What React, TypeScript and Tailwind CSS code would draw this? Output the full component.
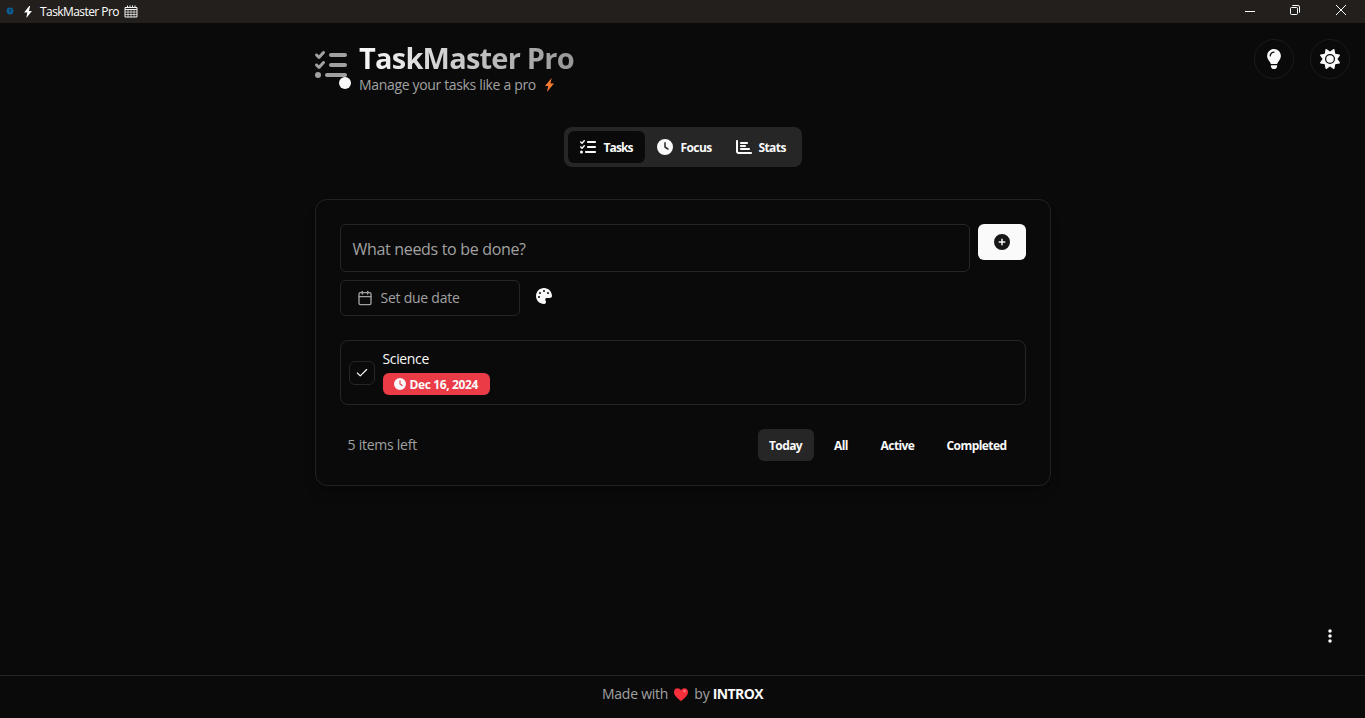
import type { ReactNode } from "react";
import { Calendar, Check } from "lucide-react";
import {
  FaChartBar,
  FaCirclePlus,
  FaClock,
  FaEllipsisVertical,
  FaLightbulb,
  FaListCheck,
  FaPalette,
  FaSun,
} from "react-icons/fa6";

function TitleBar() {
  return (
    <div className="flex h-[23px] shrink-0 items-center bg-[#231f1c] text-white">
      <svg className="ml-[6px] -mt-px size-2" viewBox="0 0 8 8">
        <circle cx="4" cy="4" r="3.4" fill="#0b5f92" />
        <path d="M3 2.6h2.2M4.1 2.6v3" stroke="#12304a" strokeWidth="1" />
      </svg>
      <svg className="ml-[10px] h-3 w-2" viewBox="0 0 8 12">
        <path d="M5.2 0 0.1 6.6h3.1L2.4 12 7.9 4.9H4.9L6.2 0z" fill="#fff" />
      </svg>
      <span className="ml-[8px] w-[80px] whitespace-nowrap text-[12px] leading-4 tracking-[-0.57px]">TaskMaster Pro</span>
      <svg className="ml-[4px] h-[13px] w-[14px]" viewBox="0 0 14 13" fill="none" stroke="#f2f2f2">
        <path d="M1 2.5h12v9.5h-12zM1 4.5h12M3.5 0.5v2M6 0.5v2M8.5 0.5v2M11 0.5v2" />
        <path d="M4 5v7M7 5v7M10 5v7M1 7h12M1 9.5h12" strokeWidth="0.7" />
      </svg>
      <div className="ml-auto flex items-center">
        <svg className="mr-[35px] -mt-[3px] h-[11px] w-[10px]" viewBox="0 0 10 11">
          <path d="M0 6.5h10" stroke="#fff" />
        </svg>
        <svg className="mr-[36px] -mt-[3px] size-[10px]" viewBox="0 0 10 10" fill="none" stroke="#fff">
          <rect x="0.5" y="2.5" width="7" height="7" rx="1" />
          <path d="M2.3 0.5H8a1.5 1.5 0 0 1 1.5 1.5v5.7" />
        </svg>
        <svg className="mr-[19px] -mt-[3px] size-[10px]" viewBox="0 0 10 10">
          <path d="M0 0 10 10M10 0 0 10" stroke="#fff" />
        </svg>
      </div>
    </div>
  );
}

function RoundButton({ children }: { children: ReactNode }) {
  return (
    <button className="flex size-10 items-center justify-center rounded-full border border-[#1b1b1b] text-[#fafafa]">
      {children}
    </button>
  );
}

function Header() {
  return (
    <header className="flex h-[104px] shrink-0 justify-between pl-[315px] pr-[15px] pt-4">
      <div className="flex">
        <div className="relative mt-[10px] h-8 w-8">
          <FaListCheck className="size-8 text-[#a1a1a1]" />
          <span className="absolute -bottom-[8px] -right-[4px] size-3 rounded-full bg-[#fafafa]" />
        </div>
        <div className="ml-3">
          <h1 className="h-[38px] w-[217px] whitespace-nowrap bg-gradient-to-r from-[#fafafa] to-[#969696] bg-clip-text text-[29px] font-bold leading-[38px] tracking-[-0.78px] text-transparent">
            TaskMaster Pro
          </h1>
          <p className="flex items-center whitespace-nowrap text-[14px] leading-4 tracking-[-0.34px] text-[#a1a1a1]">
            <span className="w-[178px]">Manage your tasks like a pro</span>
            <svg className="ml-[8px] h-[14px] w-[9px]" viewBox="0 0 9 14">
              <path d="M6.6 0 0 8h3.3L1.9 14 9 5.5H5.5z" fill="#f97b31" />
            </svg>
          </p>
        </div>
      </div>
      <div className="flex gap-4">
        <RoundButton><FaLightbulb className="size-5" /></RoundButton>
        <RoundButton><FaSun className="size-5" /></RoundButton>
      </div>
    </header>
  );
}

function Tabs() {
  return (
    <nav className="mx-auto flex h-10 w-[238px] shrink-0 items-center rounded-lg bg-[#262626] p-1 text-[12px] font-bold tracking-[-0.6px] text-[#fafafa]">
      <button className="flex h-8 w-[77px] items-center rounded-md bg-[#0a0a0a] pl-3">
        <FaListCheck className="size-4" />
        <span className="ml-2 pt-[2px] tracking-[-0.9px]">Tasks</span>
      </button>
      <button className="flex h-8 w-[79px] items-center pl-3">
        <FaClock className="size-4" />
        <span className="ml-2 pt-[2px]">Focus</span>
      </button>
      <button className="flex h-8 items-center pl-3">
        <FaChartBar className="size-4" />
        <span className="ml-[7px] pt-[2px]">Stats</span>
      </button>
    </nav>
  );
}

function TaskCard() {
  return (
    <main className="mx-auto mt-8 flex h-[287px] w-[736px] shrink-0 flex-col rounded-xl border border-[#222] p-6 shadow-lg">
      <div className="flex gap-2">
        <div className="flex h-12 flex-1 items-center rounded-md border border-[#262626] px-3 pt-[2px] text-[16px] tracking-[-0.32px] text-[#a1a1a1]">
          What needs to be done?
        </div>
        <button className="flex h-9 w-12 items-center justify-center rounded-md bg-[#fafafa] text-[#171717]">
          <FaCirclePlus className="size-4" />
        </button>
      </div>
      <div className="mt-2 flex">
        <button className="flex h-9 w-[180px] items-center rounded-md border border-[#262626] pl-4 text-[14px] text-[#a1a1a1]">
          <Calendar className="size-4" strokeWidth={2} />
          <span className="ml-2 -mt-px tracking-[-0.25px]">Set due date</span>
        </button>
        <button className="ml-4 flex h-8 items-center text-[#fafafa]">
          <FaPalette className="size-4" />
        </button>
      </div>
      <div className="mt-6 flex h-[65px] items-center rounded-lg border border-[#262626] pl-2">
        <span className="flex h-6 w-[26px] items-center justify-center rounded-md border border-[#262626] text-[#fafafa]">
          <Check className="size-[14px]" />
        </span>
        <div className="ml-2 -mt-px">
          <p className="h-6 text-[14px] leading-[20px] tracking-[-0.36px] text-[#fafafa]">Science</p>
          <span className="flex h-[22px] w-[107px] items-center whitespace-nowrap rounded-md bg-[#eb3b46] pl-[11px] text-[12px] font-bold tracking-[-0.38px] text-[#fafafa]">
            <FaClock className="mr-1 size-3" />
            <span className="pt-px">Dec 16, 2024</span>
          </span>
        </div>
      </div>
      <div className="mt-6 flex h-8 items-center justify-between pl-2 pr-[7px]">
        <span className="-mt-px text-[14px] tracking-[-0.25px] text-[#a1a1a1]">5 items left</span>
        <div className="flex gap-2 text-[12px] font-bold tracking-[-0.58px] text-[#fafafa]">
          <button className="h-8 w-14 rounded-md bg-[#262626] pt-[2px]">Today</button>
          <button className="h-8 w-[39px] pt-[2px]">All</button>
          <button className="h-8 w-[58px] pt-[2px]">Active</button>
          <button className="h-8 w-[84px] pt-[2px]">Completed</button>
        </div>
      </div>
    </main>
  );
}

function Footer() {
  return (
    <footer className="flex h-[43px] shrink-0 justify-center border-t border-[#262626] pt-[8px] text-[14px] leading-5 text-[#a1a1a1]">
      <span className="tracking-[-0.25px]">Made with</span>
      <svg className="ml-[6px] mt-[4px] h-[13px] w-[14px]" viewBox="0 0 14 13">
        <path d="M7 13C3 9.6 0 7.4 0 3.9 0 1.6 1.6 0.2 3.5 0.2 5.1 0.2 6.3 1 7 2.3 7.7 1 8.9 0.2 10.5 0.2 12.4 0.2 14 1.6 14 3.9 14 7.4 11 9.6 7 13z" fill="#f92f3c" />
        <circle cx="10.5" cy="3.1" r="1.4" fill="#ff7179" />
      </svg>
      <span className="ml-[6px]">by</span>
      <b className="ml-[3px] text-[14px] tracking-[-0.6px] text-[#fafafa]">INTROX</b>
    </footer>
  );
}

export default function App() {
  return (
    <div className="flex h-[718px] w-full flex-col overflow-hidden bg-[#0a0a0a] font-['Open_Sans','Noto_Sans',sans-serif]">
      <TitleBar />
      <Header />
      <Tabs />
      <TaskCard />
      <button className="mb-[31px] ml-auto mr-[27px] mt-auto text-[#fafafa]">
        <FaEllipsisVertical className="size-4" />
      </button>
      <Footer />
    </div>
  );
}
